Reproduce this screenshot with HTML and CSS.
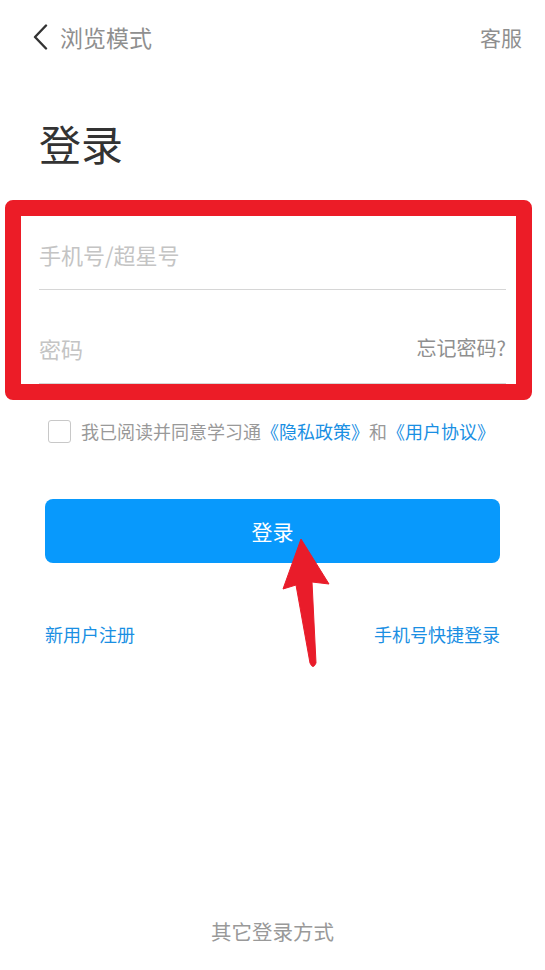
FILE: index.html
```html
<!DOCTYPE html>
<html lang="zh-CN">
<head>
    <meta charset="UTF-8">
    <meta name="viewport" content="width=device-width, initial-scale=1.0">
    <title>登录</title>
    <link rel="stylesheet" href="styles.css">
</head>
<body>
    <div class="page">
        <div class="top-bar">
            <a class="back">
                <svg width="16" height="26" viewBox="0 0 16 26">
                    <polyline points="13,1.5 2,13 13,24.5" fill="none" stroke="#333" stroke-width="2.4" stroke-linecap="round" stroke-linejoin="round"/>
                </svg>
                <span>浏览模式</span>
            </a>
            <a class="service">客服</a>
        </div>

        <h1 class="title">登录</h1>

        <form class="login-form">
            <div class="field">
                <span class="placeholder">手机号/超星号</span>
            </div>
            <div class="field">
                <span class="placeholder">密码</span>
                <a class="forgot">忘记密码?</a>
            </div>
            <div class="mark-frame"></div>
        </form>

        <label class="agree">
            <span class="checkbox"></span>
            <span>我已阅读并同意学习通<a class="link">《隐私政策》</a>和<a class="link">《用户协议》</a></span>
        </label>

        <button class="btn-login" type="button">登录</button>

        <div class="links">
            <a class="link">新用户注册</a>
            <a class="link">手机号快捷登录</a>
        </div>

        <div class="other">其它登录方式</div>

        <svg class="mark-arrow" width="52" height="136" viewBox="0 0 52 136">
            <path d="M21 3 L49 48 L32 46 L36 127 Q33 134 30 127 L16 49 L3 53 Z" fill="#e91c2a" stroke="#e91c2a" stroke-width="1" stroke-linejoin="round"/>
        </svg>
    </div>
</body>
</html>
```

FILE: styles.css
```css
body {
    margin: 0;
    background: #fff;
    font-family: "Noto Sans CJK SC", "Noto Sans", sans-serif;
    color: #333;
}
a {
    text-decoration: none;
}
.page {
    position: relative;
    display: flex;
    flex-direction: column;
    min-height: 970px;
    box-sizing: border-box;
    padding: 0 39px;
}
.top-bar {
    height: 74px;
    display: flex;
    align-items: center;
    justify-content: space-between;
    margin: 0 -16px 0 -6px;
}
.back {
    display: flex;
    align-items: center;
    gap: 11px;
    font-size: 23px;
    color: #8f8f8f;
}
.service {
    font-size: 21px;
    color: #8f8f8f;
}
.title {
    margin: 41px 0 0;
    font-size: 42px;
    line-height: 56px;
    font-weight: normal;
    color: #333;
}
.login-form {
    position: relative;
    margin-top: 25px;
}
.field {
    height: 94px;
    box-sizing: border-box;
    display: flex;
    align-items: flex-end;
    justify-content: space-between;
    padding-bottom: 23px;
    border-bottom: 1px solid #d6d6d6;
    line-height: 24px;
}
.placeholder {
    font-size: 22px;
    color: #c4c4c4;
}
.forgot {
    font-size: 20px;
    color: #8f8f8f;
}
.mark-frame {
    position: absolute;
    left: -34px;
    top: 4px;
    width: 527px;
    height: 200px;
    box-sizing: border-box;
    border: 16px solid #ec1c27;
    border-radius: 8px;
}
.agree {
    display: flex;
    align-items: center;
    gap: 10px;
    margin: 35px 0 0 9px;
    font-size: 18px;
    line-height: 24px;
    color: #999;
}
.checkbox {
    width: 21px;
    height: 21px;
    border: 1px solid #c8c8c8;
    border-radius: 3px;
}
.link {
    color: #1a8fe3;
}
.btn-login {
    margin: 56px 6px 0;
    height: 64px;
    border: none;
    border-radius: 8px;
    background: #0899fc;
    color: #fff;
    font-family: inherit;
    font-size: 21px;
}
.links {
    display: flex;
    justify-content: space-between;
    margin: 59px 6px 0;
    font-size: 18px;
    line-height: 24px;
}
.other {
    margin-top: auto;
    padding-bottom: 25px;
    text-align: center;
    font-size: 20.5px;
    line-height: 28px;
    color: #999;
}
.mark-arrow {
    position: absolute;
    left: 280px;
    top: 536px;
}
```
